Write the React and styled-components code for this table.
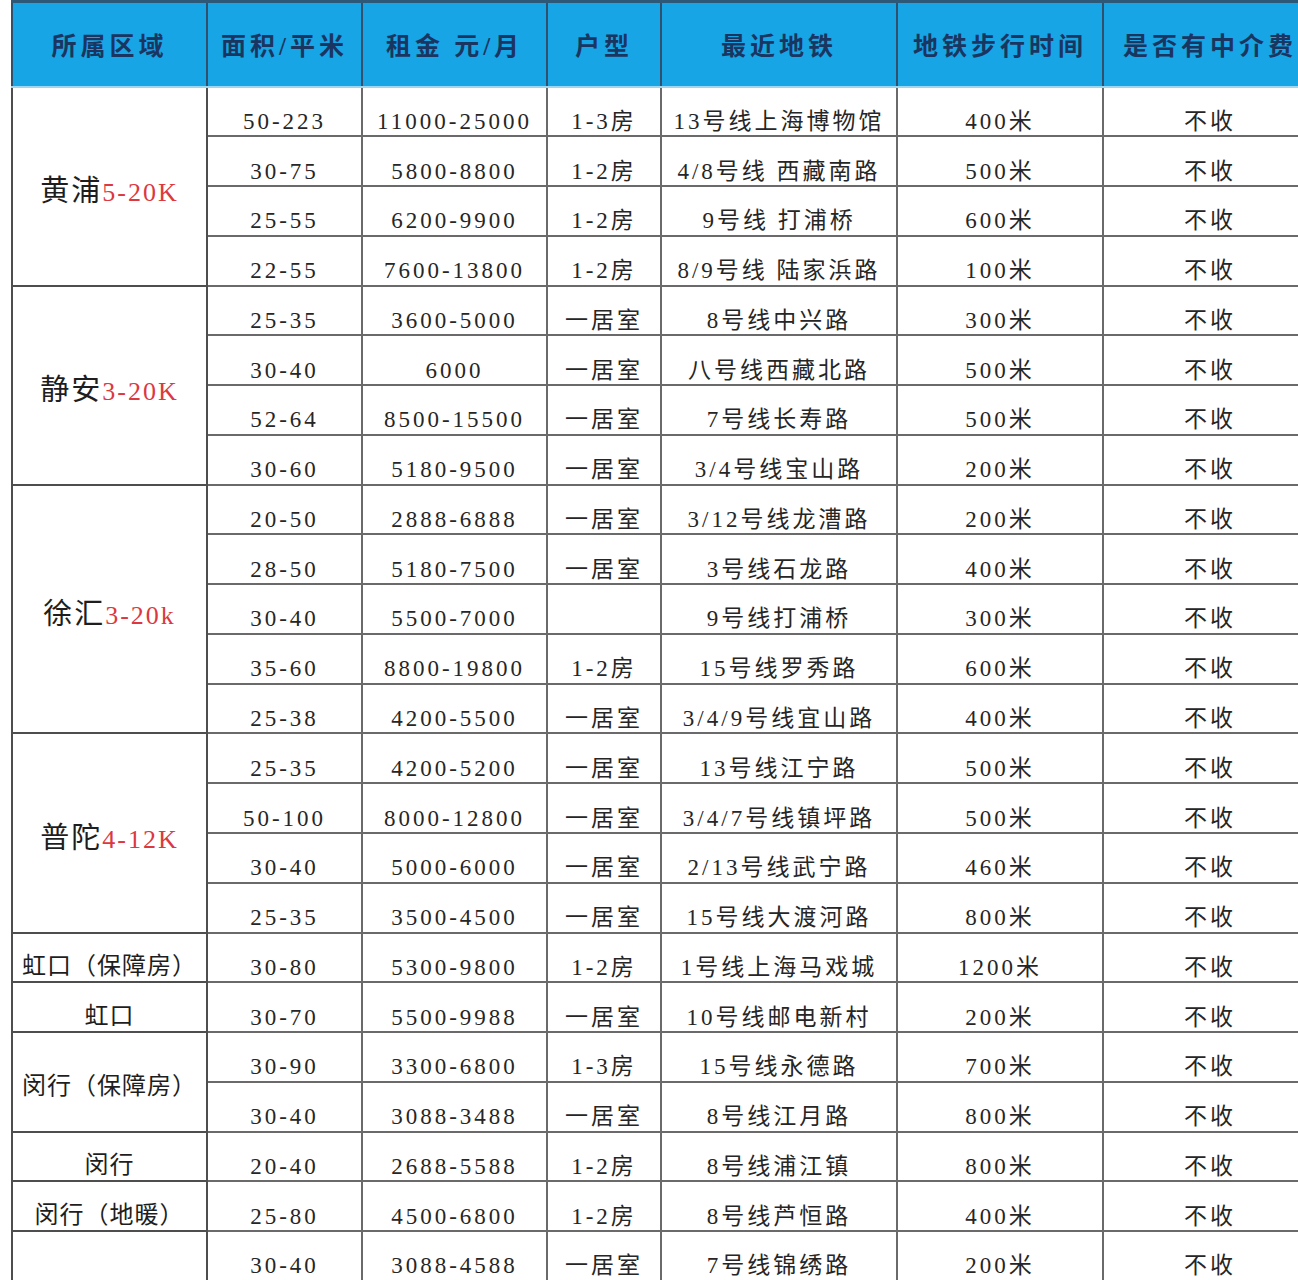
import React from 'react'
import styled, { createGlobalStyle } from 'styled-components'

const GlobalStyle = createGlobalStyle`
  html, body {
    margin: 0;
    padding: 0;
    background: #ffffff;
  }
  body {
    width: 1298px;
    height: 1280px;
    overflow: hidden;
    font-family: "Liberation Serif", "Noto Sans CJK SC", serif;
  }
`

const Sheet = styled.div`
  padding-left: 11px;
`

const Table = styled.table`
  border-collapse: collapse;
  table-layout: fixed;
  width: 1305px;
  border-top: 3px solid #2d5878;
`

const HeadRow = styled.tr`
  height: 85px;
`

const HeadCell = styled.th`
  background: #17a5e6;
  color: #1a3560;
  font-family: "Liberation Serif", "Noto Sans CJK SC", serif;
  font-size: 25px;
  font-weight: 700;
  letter-spacing: 4px;
  text-align: center;
  vertical-align: middle;
  white-space: nowrap;
  overflow: hidden;
  border-left: 2px solid #30506e;
  border-right: 2px solid #30506e;
  border-bottom: 2px solid #9fd6ef;
  padding: 0;
`

const Row = styled.tr`
  height: 49.78px;
`

const Cell = styled.td`
  color: #262626;
  font-size: 23px;
  letter-spacing: 3px;
  text-align: center;
  vertical-align: bottom;
  white-space: nowrap;
  padding: 0;
  border: 2px solid #6a6a6a;
  line-height: 1.15;
`

const RegionCell = styled.td`
  color: #1e1e1e;
  font-size: ${p => (p.big ? '29px' : '24px')};
  letter-spacing: ${p => (p.big ? '2px' : '1px')};
  text-align: center;
  vertical-align: middle;
  white-space: nowrap;
  padding: ${p => (p.low ? '12px 0 0' : '4px 0 0')};
  border: 2px solid #4e4e4e;
  overflow: hidden;
`

const Range = styled.span`
  color: #dc3840;
  font-size: 26px;
  letter-spacing: 2px;
`

const widths = [195, 155, 185, 114, 236, 206, 214]
const headers = ['所属区域', '面积/平米', '租金  元/月', '户型', '最近地铁', '地铁步行时间', '是否有中介费']

const groups = [
  {
    name: '黄浦', range: '5-20K', big: true,
    rows: [
      ['50-223', '11000-25000', '1-3房', '13号线上海博物馆', '400米'],
      ['30-75', '5800-8800', '1-2房', '4/8号线 西藏南路', '500米'],
      ['25-55', '6200-9900', '1-2房', '9号线 打浦桥', '600米'],
      ['22-55', '7600-13800', '1-2房', '8/9号线 陆家浜路', '100米'],
    ],
  },
  {
    name: '静安', range: '3-20K', big: true,
    rows: [
      ['25-35', '3600-5000', '一居室', '8号线中兴路', '300米'],
      ['30-40', '6000', '一居室', '八号线西藏北路', '500米'],
      ['52-64', '8500-15500', '一居室', '7号线长寿路', '500米'],
      ['30-60', '5180-9500', '一居室', '3/4号线宝山路', '200米'],
    ],
  },
  {
    name: '徐汇', range: '3-20k', big: true,
    rows: [
      ['20-50', '2888-6888', '一居室', '3/12号线龙漕路', '200米'],
      ['28-50', '5180-7500', '一居室', '3号线石龙路', '400米'],
      ['30-40', '5500-7000', '', '9号线打浦桥', '300米'],
      ['35-60', '8800-19800', '1-2房', '15号线罗秀路', '600米'],
      ['25-38', '4200-5500', '一居室', '3/4/9号线宜山路', '400米'],
    ],
  },
  {
    name: '普陀', range: '4-12K', big: true,
    rows: [
      ['25-35', '4200-5200', '一居室', '13号线江宁路', '500米'],
      ['50-100', '8000-12800', '一居室', '3/4/7号线镇坪路', '500米'],
      ['30-40', '5000-6000', '一居室', '2/13号线武宁路', '460米'],
      ['25-35', '3500-4500', '一居室', '15号线大渡河路', '800米'],
    ],
  },
  {
    name: '虹口（保障房）',
    rows: [['30-80', '5300-9800', '1-2房', '1号线上海马戏城', '1200米']],
  },
  {
    name: '虹口',
    rows: [['30-70', '5500-9988', '一居室', '10号线邮电新村', '200米']],
  },
  {
    name: '闵行（保障房）',
    rows: [
      ['30-90', '3300-6800', '1-3房', '15号线永德路', '700米'],
      ['30-40', '3088-3488', '一居室', '8号线江月路', '800米'],
    ],
  },
  {
    name: '闵行',
    rows: [['20-40', '2688-5588', '1-2房', '8号线浦江镇', '800米']],
  },
  {
    name: '闵行（地暖）',
    rows: [['25-80', '4500-6800', '1-2房', '8号线芦恒路', '400米']],
  },
  {
    name: '',
    rows: [['30-40', '3088-4588', '一居室', '7号线锦绣路', '200米']],
  },
]

const App = () => {
  return (
    <React.Fragment>
      <GlobalStyle />
      <Sheet>
        <Table>
          <colgroup>
            {widths.map((w, i) => <col key={i} style={{ width: w }} />)}
          </colgroup>
          <thead>
            <HeadRow>
              {headers.map(h => <HeadCell key={h}>{h}</HeadCell>)}
            </HeadRow>
          </thead>
          <tbody>
            {groups.map((g, gi) =>
              g.rows.map((r, ri) => (
                <Row key={`${gi}-${ri}`}>
                  {ri === 0 &&
                    <RegionCell rowSpan={g.rows.length} big={g.big} low={g.rows.length === 1}>
                      {g.name}
                      {g.range && <Range>{g.range}</Range>}
                    </RegionCell>
                  }
                  {r.map((v, ci) => <Cell key={ci}>{v}</Cell>)}
                  <Cell>不收</Cell>
                </Row>
              ))
            )}
          </tbody>
        </Table>
      </Sheet>
    </React.Fragment>
  )
}

export default App
